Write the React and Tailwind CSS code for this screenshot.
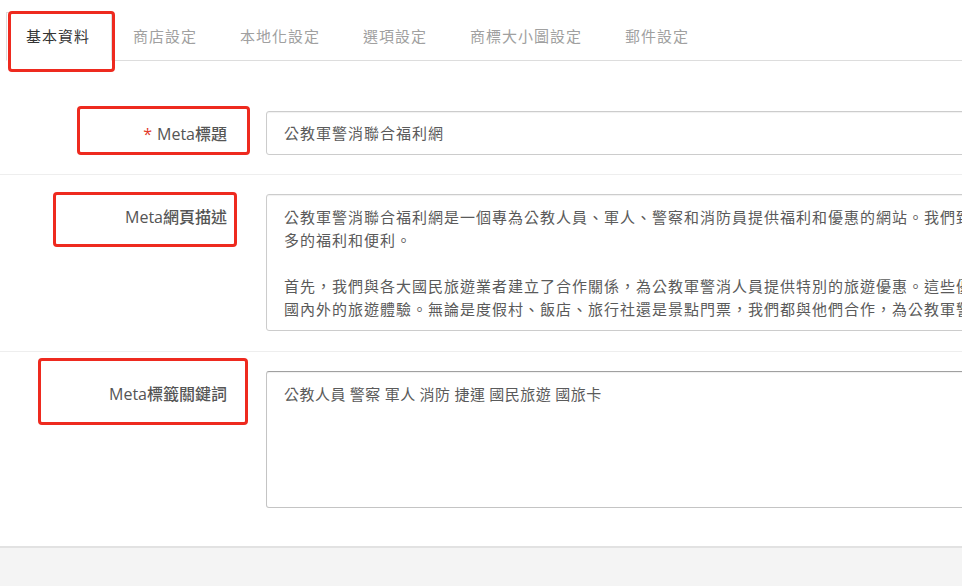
import React from "react";

const cjk = { fontFamily: '"Noto Sans CJK TC", "Noto Sans", sans-serif' };
const labelFont = { fontFamily: '"Open Sans", "Noto Sans CJK TC", sans-serif' };

function RedBox({ className }) {
  return (
    <div
      className={`pointer-events-none absolute rounded-[4px] border-[3px] border-[#ee2a1f] ${className}`}
    />
  );
}

function Tabs() {
  const tabs = ["基本資料", "商店設定", "本地化設定", "選項設定", "商標大小圖設定", "郵件設定"];
  return (
    <div className="ml-[6px] flex border-b border-[#dddddd] pt-[12px]" style={cjk}>
      {tabs.map((t, i) => (
        <div
          key={t}
          className={
            i === 0
              ? "-mb-px border border-[#dddddd] border-b-white bg-white pl-[19px] pr-[21px] pb-[13px] pt-[11px] text-[15px] leading-[23px] tracking-[1px] text-[#333]"
              : "-mb-px border border-transparent pl-[20px] pr-[21px] pb-[13px] pt-[11px] text-[15px] leading-[23px] tracking-[1px] text-[#a0a0a0]"
          }
        >
          {t}
        </div>
      ))}
    </div>
  );
}

function Label({ children, required }) {
  return (
    <div
      className="w-[227px] shrink-0 pt-[12px] text-right text-[16px] font-medium leading-[22px] text-[#555]"
      style={labelFont}
    >
      {required && <span className="mr-[5px] text-[#e23a2a]">*</span>}
      {children}
    </div>
  );
}

export default function App() {
  const desc = [
    "公教軍警消聯合福利網是一個專為公教人員、軍人、警察和消防員提供福利和優惠的網站。我們致力於為您提供更",
    "多的福利和便利。",
    "",
    "首先，我們與各大國民旅遊業者建立了合作關係，為公教軍警消人員提供特別的旅遊優惠。這些優惠包括了",
    "國內外的旅遊體驗。無論是度假村、飯店、旅行社還是景點門票，我們都與他們合作，為公教軍警消",
  ];
  return (
    <div className="relative flex h-[586px] w-[962px] flex-col overflow-hidden bg-white">
      <Tabs />
      <div className="mt-[30px]">
        <div className="flex pb-[19px] pt-[20px]">
          <Label required>Meta標題</Label>
          <div
            className="ml-[39px] h-[44px] w-[760px] shrink-0 rounded-[3px] border border-[#cccccc] pl-[17px] text-[15px] leading-[42px] tracking-[1px] text-[#5a5a5a] shadow-[inset_0_1px_1px_rgba(0,0,0,0.06)]"
            style={cjk}
          >
            公教軍警消聯合福利網
          </div>
        </div>
        <div className="flex border-t border-[#eeeeee] pb-[20px] pt-[19px]">
          <Label>Meta網頁描述</Label>
          <div
            className="ml-[39px] h-[137px] w-[760px] shrink-0 overflow-hidden rounded-[3px] border border-[#cccccc] pl-[17px] pt-[10px] text-[15px] leading-[23px] tracking-[1px] text-[#5a5a5a] shadow-[inset_0_1px_1px_rgba(0,0,0,0.06)]"
            style={cjk}
          >
            {desc.map((l, i) => (
              <div key={i} className="h-[23px] whitespace-nowrap">
                {l}
              </div>
            ))}
          </div>
        </div>
        <div className="flex border-t border-[#eeeeee] pt-[19px]">
          <Label>Meta標籤關鍵詞</Label>
          <div
            className="ml-[39px] h-[137px] w-[760px] shrink-0 rounded-[3px] border border-[#c4c4c4] border-t-[#a0a0a0] pl-[17px] pt-[10px] text-[15px] leading-[23px] tracking-[0.5px] text-[#5a5a5a] shadow-[inset_0_1px_1px_rgba(0,0,0,0.06)]"
            style={cjk}
          >
            公教人員 警察 軍人 消防 捷運 國民旅遊 國旅卡
          </div>
        </div>
      </div>
      <div className="mt-[38px] flex-1 border-t-2 border-[#e2e2e2] bg-[#f4f4f4]" />

      <RedBox className="left-[8px] top-[11px] h-[61px] w-[107px]" />
      <RedBox className="left-[77px] top-[106px] h-[49px] w-[173px]" />
      <RedBox className="left-[53px] top-[192px] h-[55px] w-[184px]" />
      <RedBox className="left-[38px] top-[358px] h-[67px] w-[210px]" />
    </div>
  );
}
